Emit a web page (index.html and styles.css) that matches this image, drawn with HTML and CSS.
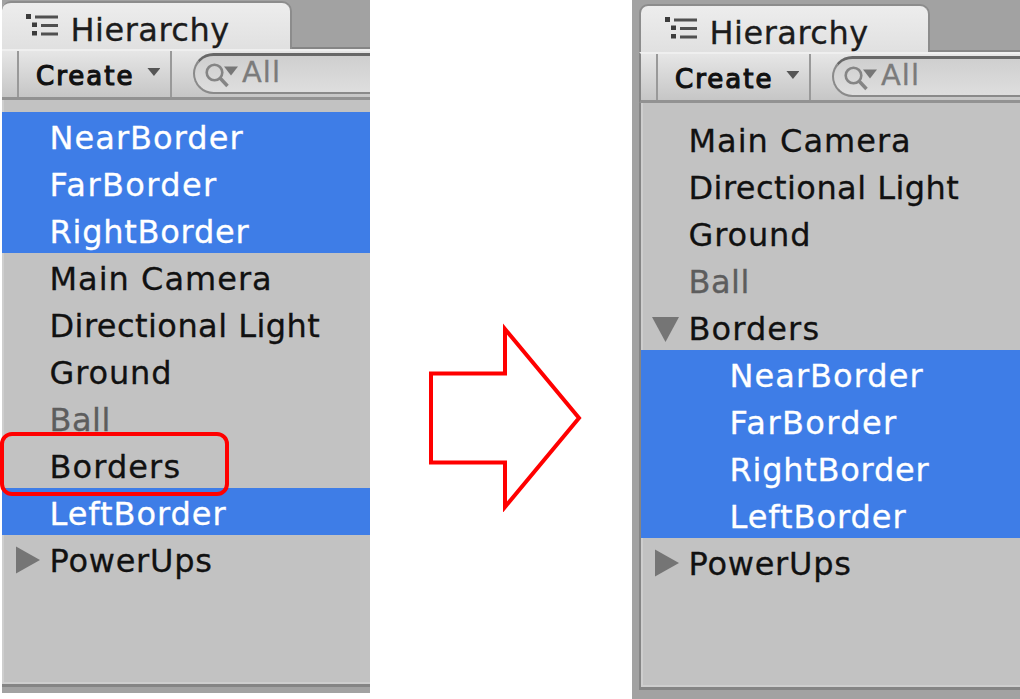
FILE: index.html
```html
<!DOCTYPE html>
<html lang="en">
<head>
<meta charset="utf-8">
<title>Hierarchy</title>
<link rel="stylesheet" href="styles.css">
</head>
<body>
<main class="stage">
  <section class="panel before">
    <header class="tabs">
      <div class="tab">
        <svg class="tree-icon" width="34" height="26" viewBox="0 0 34 26"><path d="M0 1h5v5H0zM6 9.500h5v4.500H6zM6 18h5v4.500H6z" fill="#3c3c3c"/><path d="M9 4h23M15 12.500h17M15 21h17" stroke="#505050" stroke-width="3"/></svg>
        <span class="title">Hierarchy</span>
      </div>
    </header>
    <div class="toolbar">
      <div class="create"><span>Create</span><i class="caret"></i></div>
      <div class="search">
        <svg width="34" height="28" viewBox="0 0 34 28"><circle cx="9.500" cy="10.500" r="7.800" fill="none" stroke="#858585" stroke-width="2.600"/><path d="M15 16l7.500 8" stroke="#858585" stroke-width="3.500"/><path d="M19 4.500h14l-7 9z" fill="#777"/></svg>
        <span>All</span>
      </div>
    </div>
    <ul class="list">
      <li class="row selected near">NearBorder</li>
      <li class="row selected far">FarBorder</li>
      <li class="row selected right">RightBorder</li>
      <li class="row camera">Main Camera</li>
      <li class="row light">Directional Light</li>
      <li class="row ground">Ground</li>
      <li class="row ball">Ball</li>
      <li class="row borders">Borders<span class="highlight"></span></li>
      <li class="row selected left">LeftBorder</li>
      <li class="row power"><svg class="fold" width="24" height="28" viewBox="0 0 24 28"><path d="M0 0.500L24 14 0 27.500z"/></svg>PowerUps</li>
    </ul>
  </section>

  <svg class="arrow" width="156" height="190" viewBox="0 0 156 190"><path d="M4 51.500H78V7L152 96 78 185V140.500H4z" fill="none" stroke="#f00" stroke-width="4"/></svg>

  <section class="panel after">
    <header class="tabs">
      <div class="tab">
        <svg class="tree-icon" width="34" height="26" viewBox="0 0 34 26"><path d="M0 1h5v5H0zM6 9.500h5v4.500H6zM6 18h5v4.500H6z" fill="#3c3c3c"/><path d="M9 4h23M15 12.500h17M15 21h17" stroke="#505050" stroke-width="3"/></svg>
        <span class="title">Hierarchy</span>
      </div>
    </header>
    <div class="toolbar">
      <div class="create"><span>Create</span><i class="caret"></i></div>
      <div class="search">
        <svg width="34" height="28" viewBox="0 0 34 28"><circle cx="9.500" cy="10.500" r="7.800" fill="none" stroke="#858585" stroke-width="2.600"/><path d="M15 16l7.500 8" stroke="#858585" stroke-width="3.500"/><path d="M19 4.500h14l-7 9z" fill="#777"/></svg>
        <span>All</span>
      </div>
    </div>
    <ul class="list">
      <li class="row camera">Main Camera</li>
      <li class="row light">Directional Light</li>
      <li class="row ground">Ground</li>
      <li class="row ball">Ball</li>
      <li class="row borders"><svg class="fold open" width="27" height="25" viewBox="0 0 27 25"><path d="M0 0h27L13.500 25z"/></svg>Borders</li>
      <li class="row selected child near">NearBorder</li>
      <li class="row selected child far">FarBorder</li>
      <li class="row selected child right">RightBorder</li>
      <li class="row selected child left">LeftBorder</li>
      <li class="row power"><svg class="fold" width="24" height="28" viewBox="0 0 24 28"><path d="M0 0.500L24 14 0 27.500z"/></svg>PowerUps</li>
    </ul>
  </section>
</main>
</body>
</html>
```
FILE: styles.css
```css
* { box-sizing: border-box; }
body {
  margin: 0;
  background: #fff;
  font-family: "DejaVu Sans", Verdana, sans-serif;
  overflow: hidden;
}
.stage {
  width: 1020px;
  height: 699px;
  display: flex;
  align-items: flex-start;
  padding-left: 2px;
}
.panel {
  flex: none;
  display: flex;
  flex-direction: column;
  background: #a2a2a2;
  overflow: hidden;
}
.before { width: 368px; height: 693px; padding-bottom: 6px; overflow: visible; }
.after { width: 388px; height: 699px; padding: 3px 0 9px 7px; }
.arrow { flex: none; margin: 322px 49px 0 57px; }

.tabs { height: 49px; flex: none; padding-top: 1px; border-bottom: 2px solid #858585; }
.tab {
  height: 49px;
  width: 290px;
  display: flex;
  padding: 10px 0 0 24px;
  background: linear-gradient(#ededed, #e0e0e0);
  border: solid #8c8c8c;
  border-width: 2px 2px 0 0;
  border-radius: 9px 10px 0 0;
}
.after .tab { width: 291px; border-left-width: 2px; padding-left: 24px; }
.tree-icon { flex: none; margin-right: 10.5px; }
.title {
  font-size: 32px;
  line-height: 38px;
  letter-spacing: .5px;
  margin-top: -2px;
  color: #1c1c1c;
  -webkit-text-stroke: .3px #1c1c1c;
}
.toolbar {
  height: 51px;
  flex: none;
  display: flex;
  padding-left: 15px;
  background: linear-gradient(#e6e6e6, #c6c6c6);
  border-top: 2px solid #efefef;
  border-bottom: 3px solid #929292;
}
.after .toolbar, .after .list { border-left: 2px solid #858585; }
.create {
  width: 155px;
  display: flex;
  border: solid #999;
  border-width: 0 2px;
  padding-left: 17px;
  font-size: 26px;
  line-height: 50px;
  letter-spacing: 2px;
  color: #111;
  -webkit-text-stroke: 1.2px #111;
}
.caret {
  width: 13px;
  height: 8px;
  margin: 17px 0 0 13px;
  background: #555;
  clip-path: polygon(0 0, 100% 0, 50% 100%);
}
.search {
  flex: 1;
  height: 41px;
  margin: 2px 0 0 21px;
  display: flex;
  padding: 6px 0 0 10px;
  border: 2px solid #8a8a8a;
  border-top: 3px solid #686868;
  border-right: 0;
  border-radius: 21px 0 0 21px;
  background: linear-gradient(#cfcfcf, #dedede);
  color: #7b7b7b;
  font-size: 29px;
  line-height: 30px;
}
.search span { margin: -5px 0 0 3px; letter-spacing: 1px; -webkit-text-stroke: .3px #7b7b7b; }
.list {
  flex: 1;
  margin: 0;
  padding: 12px 0 0;
  list-style: none;
  background: #c2c2c2;
  border-bottom: 3px solid #858585;
  box-shadow: inset 2px -2px 0 #cecece;
}
.row {
  position: relative;
  height: 47px;
  padding-left: 47.5px;
  font-size: 32px;
  line-height: 53px;
  color: #111;
  white-space: nowrap;
  -webkit-text-stroke: .3px currentColor;
}
.child { padding-left: 88.5px; }
.selected { background: #3e7de7; color: #fff; }
.near { letter-spacing: 1.05px; }
.far { letter-spacing: 1.4px; }
.right { letter-spacing: .75px; }
.camera { letter-spacing: 1px; }
.light { letter-spacing: .45px; }
.ground { letter-spacing: .85px; }
.ball { letter-spacing: .5px; color: #5d5d5d; }
.borders { letter-spacing: 1.1px; z-index: 1; }
.left { letter-spacing: .95px; }
.power { letter-spacing: .75px; }
.fold {
  position: absolute;
  left: 14px;
  top: 11px;
  fill: #757575;
}
.open { left: 11px; top: 14px; }
.highlight {
  position: absolute;
  left: -2px;
  top: -9px;
  width: 229px;
  height: 64px;
  border: 4px solid #f00;
  border-radius: 12px;
}
```
